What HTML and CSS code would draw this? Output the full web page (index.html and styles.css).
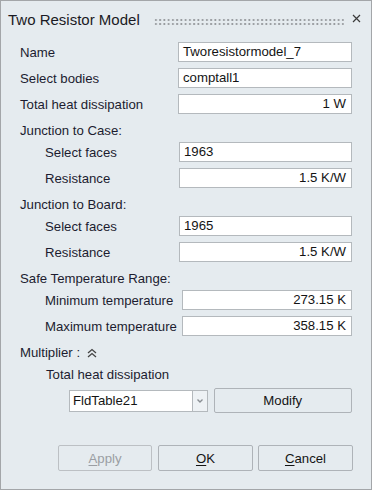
FILE: index.html
```html
<!DOCTYPE html>
<html>
<head>
<meta charset="utf-8">
<link rel="stylesheet" href="styles.css">
</head>
<body>
<div class="dialog">
  <div class="titlebar">
    <span class="title">Two Resistor Model</span>
    <span class="grip"></span>
    <svg class="close" width="9" height="9" viewBox="0 0 9 9"><path d="M1 1L8 8M8 1L1 8" stroke="#3a3a3a" stroke-width="1.2" fill="none"/></svg>
  </div>
  <div class="form">
    <div class="row"><span class="lbl">Name</span><span class="field">Tworesistormodel_7</span></div>
    <div class="row"><span class="lbl">Select bodies</span><span class="field">comptall1</span></div>
    <div class="row"><span class="lbl">Total heat dissipation</span><span class="field num">1 W</span></div>
    <div class="heading">Junction to Case:</div>
    <div class="row sub"><span class="lbl">Select faces</span><span class="field">1963</span></div>
    <div class="row sub"><span class="lbl">Resistance</span><span class="field num">1.5 K/W</span></div>
    <div class="heading">Junction to Board:</div>
    <div class="row sub"><span class="lbl">Select faces</span><span class="field">1965</span></div>
    <div class="row sub"><span class="lbl">Resistance</span><span class="field num">1.5 K/W</span></div>
    <div class="heading">Safe Temperature Range:</div>
    <div class="row sub wide"><span class="lbl">Minimum temperature</span><span class="field num">273.15 K</span></div>
    <div class="row sub wide"><span class="lbl">Maximum temperature</span><span class="field num">358.15 K</span></div>
    <div class="heading mult">Multiplier :
      <svg class="chev" width="10" height="10" viewBox="0 0 10 10"><path d="M1 5L5 1.5L9 5M1 9L5 5.5L9 9" stroke="#444" stroke-width="1.3" fill="none"/></svg>
    </div>
    <div class="sublabel">Total heat dissipation</div>
    <div class="comborow">
      <span class="combo">FldTable21</span>
      <span class="drop"><svg width="8" height="6" viewBox="0 0 8 6"><path d="M1.5 1.5L4 4L6.5 1.5" stroke="#8a8f94" stroke-width="1.4" fill="none"/></svg></span>
      <span class="btn modify">Modify</span>
    </div>
  </div>
  <div class="buttons">
    <span class="btn disabled apply"><u>A</u>pply</span>
    <span class="btn ok"><u>O</u>K</span>
    <span class="btn cancel"><u>C</u>ancel</span>
  </div>
</div>
</body>
</html>
```
FILE: styles.css
```css
html, body {
  margin: 0;
  padding: 0;
}
body {
  font-family: "Liberation Sans", Arial, sans-serif;
  font-size: 13.2px;
  color: #1c1c30;
}
.dialog {
  width: 372px;
  height: 490px;
  box-sizing: border-box;
  border: 1px solid #a3a6a9;
  background: #e5ebef;
  display: flex;
  flex-direction: column;
}
.titlebar {
  height: 36px;
  display: flex;
  align-items: center;
  flex-shrink: 0;
}
.title {
  font-size: 15px;
  padding-left: 7px;
  color: #1a1a24;
  white-space: nowrap;
}
.grip {
  margin-left: 14px;
  width: 190px;
  height: 8px;
  margin-top: 6px;
  background-image: radial-gradient(circle at 2px 2px, #96999d 0.8px, transparent 1.2px);
  background-size: 4.25px 4px;
}
.close {
  margin-left: 8px;
  margin-top: -1px;
}
.form {
  display: flex;
  flex-direction: column;
  padding: 5px 19px 0 18px;
}
.row {
  display: flex;
  align-items: center;
  height: 20px;
  flex-shrink: 0;
  margin-bottom: 6px;
}
.lbl {
  width: 159px;
  flex-shrink: 0;
  box-sizing: border-box;
  white-space: nowrap;
  padding-left: 1px;
}
.row.sub .lbl {
  width: 160px;
  padding-left: 26px;
}
.row.sub.wide .lbl {
  width: 163px;
}
.field {
  flex: 1;
  height: 20px;
  box-sizing: border-box;
  border: 1px solid #b4b9bd;
  background: #fff;
  padding: 0 4px;
  line-height: 18px;
  color: #141414;
  white-space: nowrap;
}
.field.num {
  text-align: right;
  padding-right: 5px;
}
.heading {
  margin-top: 2px;
  height: 17px;
  flex-shrink: 0;
  line-height: 17px;
  margin-bottom: 3px;
  padding-left: 1px;
}
.heading.mult {
  display: flex;
  align-items: center;
  margin-bottom: 5px;
}
.chev {
  margin-left: 7px;
}
.sublabel {
  height: 17px;
  line-height: 17px;
  padding-left: 27px;
  margin-bottom: 5px;
}
.comborow {
  display: flex;
  align-items: center;
  height: 25px;
  padding-left: 50px;
}
.combo {
  width: 123px;
  height: 22px;
  box-sizing: border-box;
  border: 1px solid #b4b9bd;
  border-right: none;
  background: #fff;
  line-height: 20px;
  padding-left: 3px;
  color: #141414;
}
.drop {
  width: 16px;
  height: 22px;
  box-sizing: border-box;
  border: 1px solid #b4b9bd;
  background: #eef2f5;
  display: flex;
  align-items: center;
  justify-content: center;
}
.btn {
  box-sizing: border-box;
  border: 1px solid #aeb3b8;
  border-radius: 2px;
  background: #e5ebef;
  display: flex;
  align-items: center;
  justify-content: center;
  color: #141414;
}
.btn u {
  text-decoration-thickness: 1px;
  text-underline-offset: 2px;
}
.modify {
  margin-left: 6px;
  width: 139px;
  height: 25px;
}
.buttons {
  margin-top: auto;
  display: flex;
  justify-content: flex-end;
  padding: 0 18px 18px 0;
}
.buttons .btn {
  height: 26px;
  width: 95px;
}
.buttons .apply {
  width: 94px;
}
.buttons .ok {
  margin-left: 6px;
}
.buttons .cancel {
  margin-left: 5px;
}
.btn.disabled {
  color: #9a9ea3;
  border-color: #bcc0c4;
}
```
